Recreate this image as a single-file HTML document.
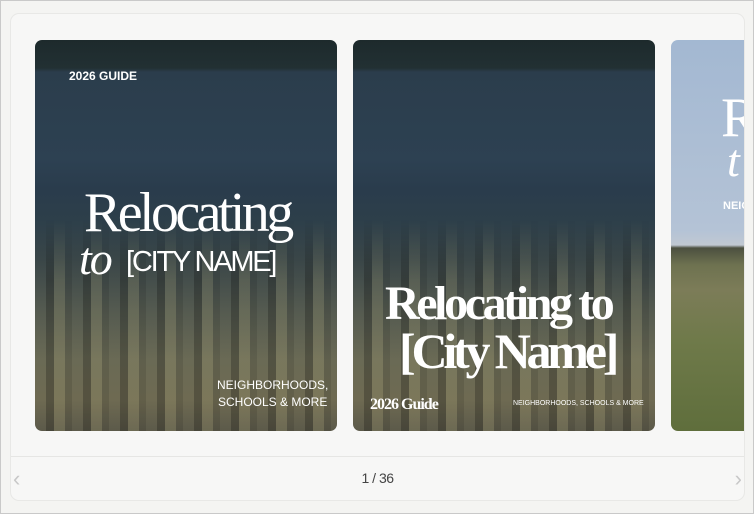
<!DOCTYPE html>
<html><head><meta charset="utf-8"><style>
html,body{margin:0;padding:0;}
body{width:754px;height:514px;background:#f4f4f2;position:relative;overflow:hidden;font-family:"Liberation Sans",sans-serif;}
.frame{position:absolute;left:0;top:0;width:752px;height:512px;border:1px solid #c9c9c9;background:#f4f4f2;}
.panel{position:absolute;left:10px;top:13px;width:733px;height:486px;border:1px solid #e8e8e6;border-radius:9px;background:#f7f7f6;overflow:hidden;}
.card{position:absolute;top:26px;height:391px;border-radius:7px;overflow:hidden;}
.city{width:302px;background:
 linear-gradient(180deg,#1d2a2c 0px,#223033 28px,#2b3d4c 32px,#2d4152 120px,#2a3c4c 150px,#2d3f4a 180px,#3a4648 220px,#545a50 270px,#6a6a55 320px,#6e6a52 360px,#5c5a4a 391px);}
.city:before{content:"";position:absolute;inset:0;background:
 repeating-linear-gradient(90deg,rgba(0,0,0,.0) 0 11px,rgba(0,0,0,.22) 11px 19px,rgba(210,200,140,.14) 19px 30px,rgba(0,0,0,.1) 30px 37px);
 -webkit-mask:linear-gradient(180deg,transparent 0,transparent 180px,#000 240px);mask:linear-gradient(180deg,transparent 0,transparent 180px,#000 240px);}
.field{width:80px;background:linear-gradient(180deg,#a3b8d2 0,#b4c3d6 190px,#c0c8d2 205px,#4c5040 208px,#6e7250 225px,#7c7c58 250px,#6f7a4a 300px,#5f6e3c 391px);}
.t{position:absolute;color:#fff;white-space:nowrap;}
.serif{font-family:"Liberation Serif",serif;}
.divider{position:absolute;left:0;right:0;top:442px;height:1px;background:#e6e6e4;}
.pg{position:absolute;left:0;right:0;top:456px;text-align:center;font-size:14px;color:#444;letter-spacing:-0.5px;}
.arr{position:absolute;top:452px;color:#c8c8c8;font-size:22px;}
</style></head><body>
<div class="frame"></div>
<div class="panel">
 <div class="card city" style="left:24px;">
  <div class="t" style="left:34px;top:29px;font-size:12px;font-weight:bold;">2026 GUIDE</div>
  <div class="t serif" style="left:49px;top:143px;font-size:56px;letter-spacing:-3.6px;line-height:60px;">Relocating</div>
  <div class="t serif" style="left:44px;top:196px;font-size:46px;font-style:italic;letter-spacing:-2px;line-height:46px;">to</div>
  <div class="t" style="left:91px;top:206px;font-size:29px;letter-spacing:-2.2px;line-height:32px;">[CITY NAME]</div>
  <div class="t" style="left:182px;top:337px;font-size:12px;line-height:17px;text-align:center;">NEIGHBORHOODS,<br>SCHOOLS &amp; MORE</div>
 </div>
 <div class="card city" style="left:342px;">
  <div class="t serif" style="left:32px;top:240px;font-size:48px;font-weight:bold;letter-spacing:-3.4px;line-height:48px;">Relocating to</div>
  <div class="t serif" style="left:46px;top:286px;font-size:50px;font-weight:bold;letter-spacing:-4.2px;line-height:50px;">[City Name]</div>
  <div class="t serif" style="left:17px;top:356px;font-size:16px;font-weight:bold;letter-spacing:-1px;">2026 Guide</div>
  <div class="t" style="left:160px;top:360px;font-size:7px;">NEIGHBORHOODS, SCHOOLS &amp; MORE</div>
 </div>
 <div class="card field" style="left:660px;">
  <div class="t serif" style="left:50px;top:48px;font-size:56px;line-height:60px;">R</div>
  <div class="t serif" style="left:56px;top:98px;font-size:46px;font-style:italic;line-height:46px;">t</div>
  <div class="t" style="left:52px;top:160px;font-size:11px;font-weight:bold;">NEIG</div>
 </div>
 <div class="divider"></div>
 <div class="arr" style="left:2px;">&#8249;</div>
 <div class="pg">1 / 36</div>
 <div class="arr" style="right:2px;">&#8250;</div>
</div>
</body></html>
